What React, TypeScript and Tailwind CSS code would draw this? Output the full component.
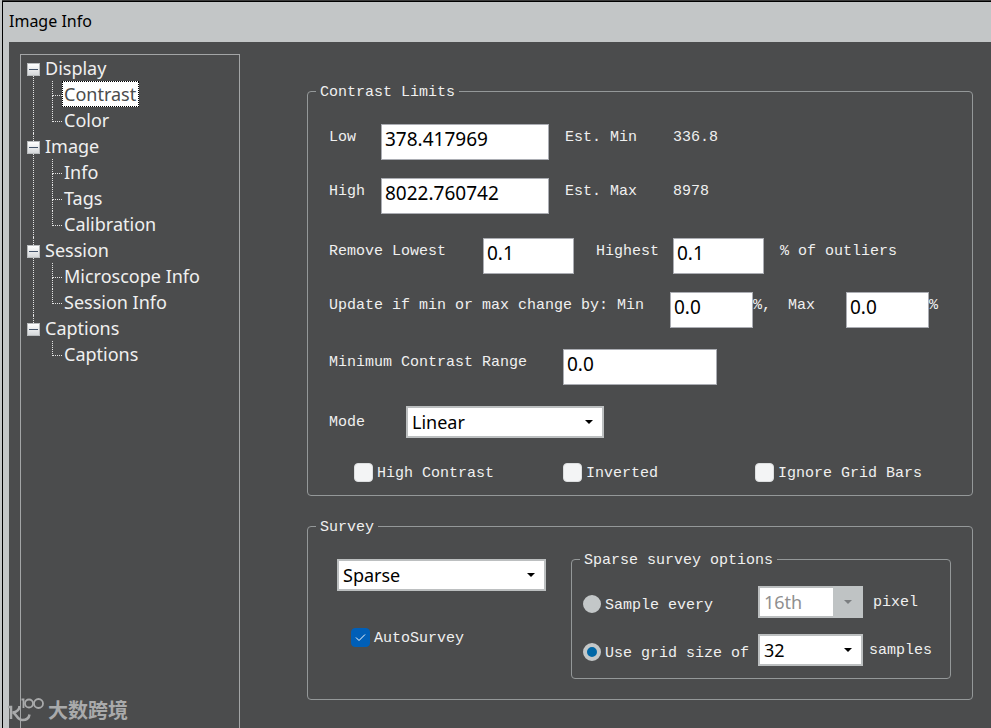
import { useState } from 'react';
import type { ReactNode } from 'react';
import clsx from 'clsx';

type TreeGroup = { label: string; children: string[] };

const tree: TreeGroup[] = [
  { label: 'Display', children: ['Contrast', 'Color'] },
  { label: 'Image', children: ['Info', 'Tags', 'Calibration'] },
  { label: 'Session', children: ['Microscope Info', 'Session Info'] },
  { label: 'Captions', children: ['Captions'] },
];

const uiFont = "font-['Noto_Sans','Open_Sans',sans-serif]";

function TreeNode({ group, first, last, selected, onSelect }: {
  group: TreeGroup;
  first: boolean;
  last: boolean;
  selected: string;
  onSelect: (key: string) => void;
}) {
  return (
    <li role="treeitem" aria-expanded="true" className="flex">
      <div className="flex w-[13px] flex-col">
        <div className={clsx('ml-1.5 h-2', !first && 'border-l border-dotted border-[#e4e4e4]')} />
        <button
          type="button"
          aria-label={`Collapse ${group.label}`}
          className="flex size-[13px] items-center justify-center border border-[#b9bcbe] bg-linear-to-b from-white to-[#d5d8da]"
        >
          <span className="h-px w-[9px] bg-[#44546a]" />
        </button>
        <div className={clsx('ml-1.5 flex-1', !last && 'border-l border-dotted border-[#e4e4e4]')} />
      </div>
      <div className="pl-[5px]">
        <div className="h-[26px] leading-[26px]">{group.label}</div>
        <ul role="group" className="pl-[7px]">
          {group.children.map((child, i) => {
            const key = `${group.label}/${child}`;
            const active = key === selected;
            return (
              <li key={child} role="treeitem" aria-selected={active} className="flex h-[26px]">
                <div className="flex w-2.5 flex-col">
                  <div className="h-[15px] border-b border-l border-dotted border-[#e4e4e4]" />
                  <div
                    className={clsx(
                      'flex-1',
                      i < group.children.length - 1 && 'border-l border-dotted border-[#e4e4e4]',
                    )}
                  />
                </div>
                <button
                  type="button"
                  onClick={() => onSelect(key)}
                  className={clsx(
                    'border border-dotted pr-0.5 pl-px leading-6',
                    active ? 'border-black bg-white text-[#4b4c4d]' : 'border-transparent',
                  )}
                >
                  {child}
                </button>
              </li>
            );
          })}
        </ul>
      </div>
    </li>
  );
}

function GroupBox({ title, className, children }: { title: string; className?: string; children: ReactNode }) {
  return (
    <fieldset className={clsx('min-w-0 rounded-[4px] border border-[#949899]', className)}>
      <legend className="ml-2 px-1 pt-1 leading-5">{title}</legend>
      {children}
    </fieldset>
  );
}

function NumberField({ id, value, className }: { id: string; value: string; className: string }) {
  return (
    <input
      id={id}
      type="text"
      defaultValue={value}
      className={clsx(
        'h-9 shrink-0 border border-[#abadb3] bg-white px-[3px] pb-1.5 text-[19px] leading-7 text-black outline-none',
        uiFont,
        className,
      )}
    />
  );
}

function SelectField({ id, label, value, disabled, className }: {
  id: string;
  label?: string;
  value: string;
  disabled?: boolean;
  className: string;
}) {
  return (
    <div className={clsx('relative shrink-0', className)}>
      <select
        id={id}
        aria-label={label}
        disabled={disabled}
        className={clsx(
          'block h-8 w-full appearance-none border-2 border-[#bcbfc0] bg-white pl-1 text-[18px] leading-7 opacity-100 outline-none',
          uiFont,
          disabled ? 'text-[#8f8f8f]' : 'text-black',
        )}
      >
        <option>{value}</option>
      </select>
      <span
        className={clsx(
          'pointer-events-none absolute inset-y-0 right-0 flex w-[30px] items-center justify-center',
          disabled ? 'bg-[#bfc3c4] text-[#7b7e80]' : 'text-black',
        )}
      >
        <svg width="8" height="4" viewBox="0 0 8 4" fill="currentColor" aria-hidden="true">
          <path d="M0 0h8L4 4z" />
        </svg>
      </span>
    </div>
  );
}

function CheckField({ label, defaultChecked, className }: {
  label: string;
  defaultChecked?: boolean;
  className?: string;
}) {
  return (
    <label className={clsx('relative flex items-center gap-1', className)}>
      <input
        type="checkbox"
        defaultChecked={defaultChecked}
        className="peer size-[19px] shrink-0 appearance-none rounded-[4px] border border-[#dcdedf] bg-[#f3f4f5] checked:border-[#005fb8] checked:bg-[#005fb8]"
      />
      <svg
        className="pointer-events-none absolute left-0 hidden size-[19px] peer-checked:block"
        viewBox="0 0 19 19"
        fill="none"
        stroke="white"
        aria-hidden="true"
      >
        <path d="M5 9.5l3 3 6-6" />
      </svg>
      <span className="pt-1 leading-5">{label}</span>
    </label>
  );
}

function RadioField({ label, defaultChecked, className }: {
  label: string;
  defaultChecked?: boolean;
  className?: string;
}) {
  return (
    <label className={clsx('flex shrink-0 items-center gap-1 pt-1', className)}>
      <input
        type="radio"
        name="survey-sampling"
        defaultChecked={defaultChecked}
        className="size-[18px] shrink-0 appearance-none rounded-full border-4 border-[#c3c7c8] bg-[#c3c7c8] checked:bg-[#0067a6]"
      />
      <span className="pt-1 leading-5">{label}</span>
    </label>
  );
}

function Watermark() {
  return (
    <div className="pointer-events-none absolute bottom-1 left-2 flex items-center gap-1 text-[#a9aaab]">
      <svg width="36" height="28" viewBox="0 0 36 28" fill="none" stroke="currentColor" aria-hidden="true">
        <path d="M0 11h3v12" strokeWidth="2.5" />
        <path d="M11.500 10c0 4-3 6-7 6.500 4 .5 4 7.500 10 7.500 4 0 6.500-2 7-5.500" strokeWidth="2.500" />
        <path d="M13.500 3.500h2V12" strokeWidth="1.800" />
        <circle cx="21" cy="7.500" r="4" strokeWidth="1.800" />
        <circle cx="30.500" cy="7.500" r="4.500" strokeWidth="1.800" />
      </svg>
      <span className="font-['Noto_Sans_CJK_SC',sans-serif] text-[20px] leading-6 font-bold">大数跨境</span>
    </div>
  );
}

export default function App() {
  const [selected, setSelected] = useState('Display/Contrast');

  return (
    <div className="relative flex min-h-screen flex-col bg-[#c3c6c7] pl-0.5">
      <div className="h-px bg-[#3a3a3a]" />
      <div className="flex flex-1 flex-col border-t border-l border-black">
        <header className="h-10 pl-1.5">
          <h1 className={clsx('text-[16px] leading-[38px] text-black', uiFont)}>Image Info</h1>
        </header>
        <div className="ml-1.5 flex flex-1 bg-[#4b4c4d] pr-[18px] pl-[11px] text-[#f0f0f0]">
          <nav className="mt-3 w-[220px] shrink-0 border border-b-0 border-[#a3a5a6] pl-1.5">
            <ul role="tree" aria-label="Image Info sections" className={clsx('text-[18px]', uiFont)}>
              {tree.map((group, i) => (
                <TreeNode
                  key={group.label}
                  group={group}
                  first={i === 0}
                  last={i === tree.length - 1}
                  selected={selected}
                  onSelect={setSelected}
                />
              ))}
            </ul>
          </nav>

          <main className="ml-[67px] min-w-0 flex-1 pt-[37px] font-['Liberation_Mono',monospace] text-[15px] leading-7 whitespace-nowrap">
            <GroupBox title="Contrast Limits">
              <div className="pt-[21px] pb-[11px] pl-[21px]">
                <div className="flex items-start">
                  <label htmlFor="low" className="w-[52px]">Low</label>
                  <NumberField id="low" value="378.417969" className="w-[168px]" />
                  <span className="ml-4 w-[108px]">Est. Min</span>
                  <output>336.8</output>
                </div>
                <div className="mt-[18px] flex items-start">
                  <label htmlFor="high" className="w-[52px]">High</label>
                  <NumberField id="high" value="8022.760742" className="w-[168px]" />
                  <span className="ml-4 w-[108px]">Est. Max</span>
                  <output>8978</output>
                </div>
                <div className="mt-6 flex items-start">
                  <label htmlFor="lowest" className="w-[154px]">Remove Lowest</label>
                  <NumberField id="lowest" value="0.1" className="w-[91px]" />
                  <label htmlFor="highest" className="ml-[22px] w-[77px]">Highest</label>
                  <NumberField id="highest" value="0.1" className="w-[91px]" />
                  <span className="ml-4">% of outliers</span>
                </div>
                <div className="mt-[18px] flex items-start">
                  <label htmlFor="change-min" className="w-[341px]">Update if min or max change by: Min</label>
                  <NumberField id="change-min" value="0.0" className="w-[83px]" />
                  <span className="w-[35px]">%,</span>
                  <label htmlFor="change-max" className="w-[58px]">Max</label>
                  <NumberField id="change-max" value="0.0" className="w-[83px]" />
                  <span>%</span>
                </div>
                <div className="mt-[21px] flex items-start">
                  <label htmlFor="range" className="w-[234px]">Minimum Contrast Range</label>
                  <NumberField id="range" value="0.0" className="w-[154px]" />
                </div>
                <div className="mt-[21px] flex items-center">
                  <label htmlFor="mode" className="w-[77px] pt-0.5">Mode</label>
                  <SelectField id="mode" value="Linear" className="w-[198px]" />
                </div>
                <div className="mt-[22px] flex pl-[25px]">
                  <CheckField label="High Contrast" className="w-[209px]" />
                  <CheckField label="Inverted" className="w-48" />
                  <CheckField label="Ignore Grid Bars" />
                </div>
              </div>
            </GroupBox>

            <GroupBox title="Survey" className="mt-[18px]">
              <div className="flex items-start gap-[25px] pt-[9px] pr-[21px] pb-5 pl-[29px]">
                <div className="flex flex-col gap-[34px] pt-3">
                  <SelectField id="survey-type" label="Survey type" value="Sparse" className="w-[209px]" />
                  <CheckField label="AutoSurvey" defaultChecked className="ml-3.5" />
                </div>
                <GroupBox title="Sparse survey options" className="flex-1">
                  <div className="pt-[15px] pb-3 pl-[11px]">
                    <div className="flex items-center">
                      <RadioField label="Sample every" className="w-[175px]" />
                      <SelectField id="sample-every" label="Sample interval" value="16th" disabled className="w-[105px]" />
                      <span className="ml-2.5 pt-0.5">pixel</span>
                    </div>
                    <div className="mt-4 flex items-center">
                      <RadioField label="Use grid size of" defaultChecked className="w-[175px]" />
                      <SelectField id="grid-size" label="Grid size" value="32" className="w-[105px]" />
                      <span className="ml-1.5 pt-0.5">samples</span>
                    </div>
                  </div>
                </GroupBox>
              </div>
            </GroupBox>
          </main>
        </div>
      </div>
      <Watermark />
    </div>
  );
}
